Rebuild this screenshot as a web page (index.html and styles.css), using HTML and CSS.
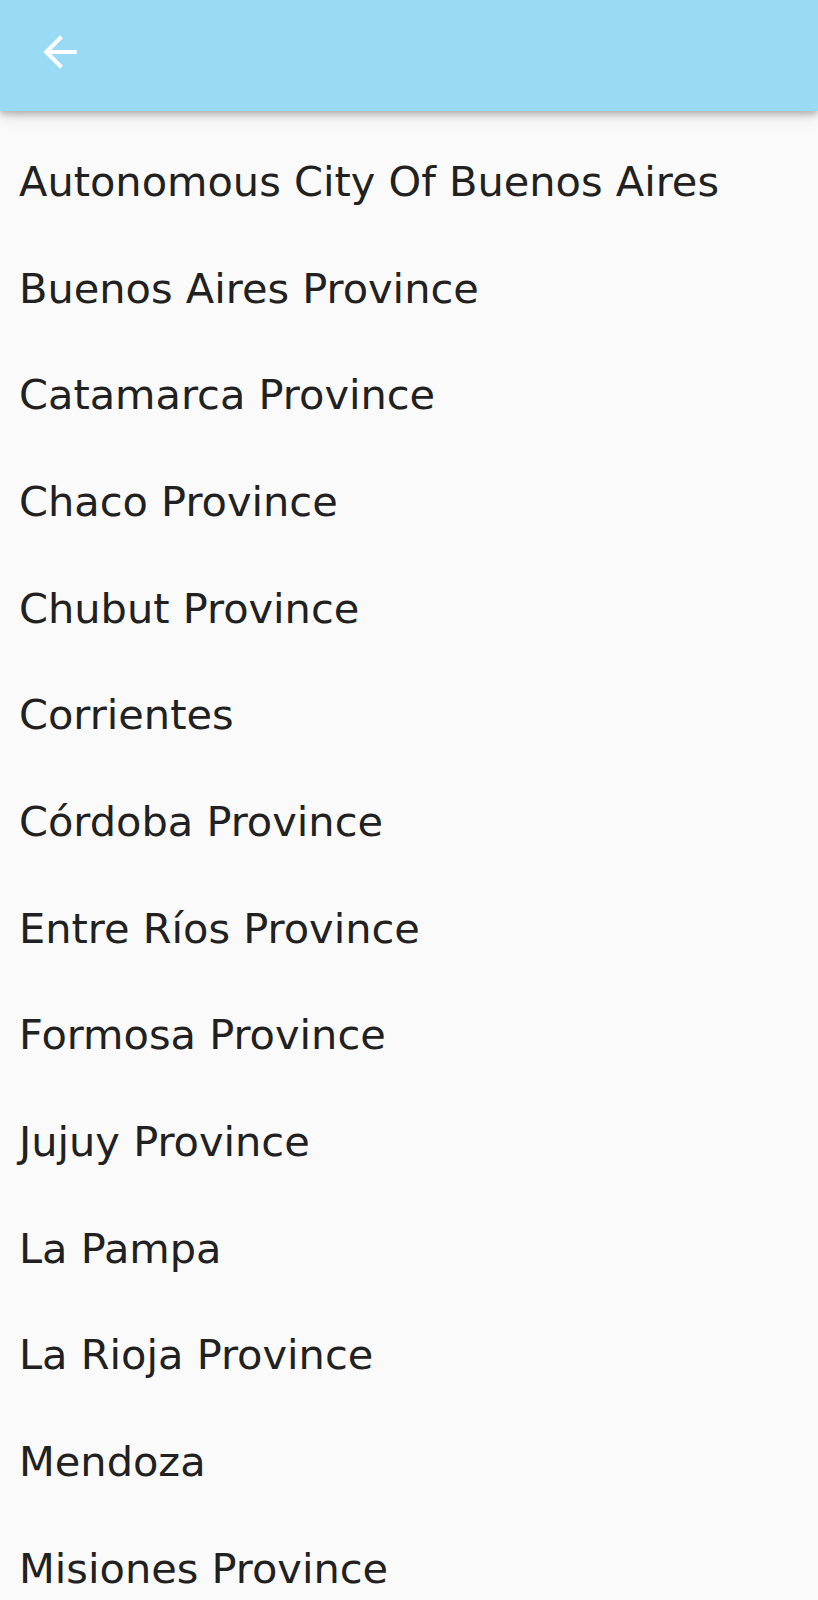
FILE: index.html
```html
<!DOCTYPE html>
<html lang="en">
<head>
<meta charset="utf-8">
<title>Provinces</title>
<link rel="stylesheet" href="styles.css">
</head>
<body>
<header class="appbar">
  <button class="back" aria-label="Back">
    <svg viewBox="0 0 24 24" class="back-icon"><path d="M20 11H7.83l5.59-5.59L12 4l-8 8 8 8 1.41-1.41L7.83 13H20v-2z"/></svg>
  </button>
</header>
<ul class="list">
  <li class="row">Autonomous City Of Buenos Aires</li>
  <li class="row">Buenos Aires Province</li>
  <li class="row">Catamarca Province</li>
  <li class="row">Chaco Province</li>
  <li class="row">Chubut Province</li>
  <li class="row">Corrientes</li>
  <li class="row">Córdoba Province</li>
  <li class="row">Entre Ríos Province</li>
  <li class="row">Formosa Province</li>
  <li class="row">Jujuy Province</li>
  <li class="row">La Pampa</li>
  <li class="row">La Rioja Province</li>
  <li class="row">Mendoza</li>
  <li class="row row-last">Misiones Province</li>
</ul>
</body>
</html>
```
FILE: styles.css
```css
html, body {
  margin: 0;
  padding: 0;
  height: 100%;
  overflow: hidden;
  background: #fafafa;
}
body {
  font-family: "DejaVu Sans", "Noto Sans", sans-serif;
  color: #212121;
}
.appbar {
  position: relative;
  z-index: 1;
  height: 111px;
  background: #99daf4;
  box-shadow: 0 3px 6px rgba(0, 0, 0, 0.22), 0 6px 14px rgba(0, 0, 0, 0.12);
  display: flex;
  align-items: flex-start;
}
.back {
  margin: 27px 0 0 35px;
  width: 50px;
  height: 50px;
  padding: 0;
  border: 0;
  background: none;
  display: flex;
}
.back-icon {
  width: 50px;
  height: 50px;
  fill: #ffffff;
}
.list {
  list-style: none;
  margin: 0;
  padding: 18px 0 0 0;
}
.row {
  height: 106.67px;
  line-height: 106.67px;
  padding-left: 19px;
  font-size: 41.5px;
  white-space: nowrap;
}
.row-last {
  height: 80px;
  line-height: 106.67px;
  overflow: visible;
}
```
